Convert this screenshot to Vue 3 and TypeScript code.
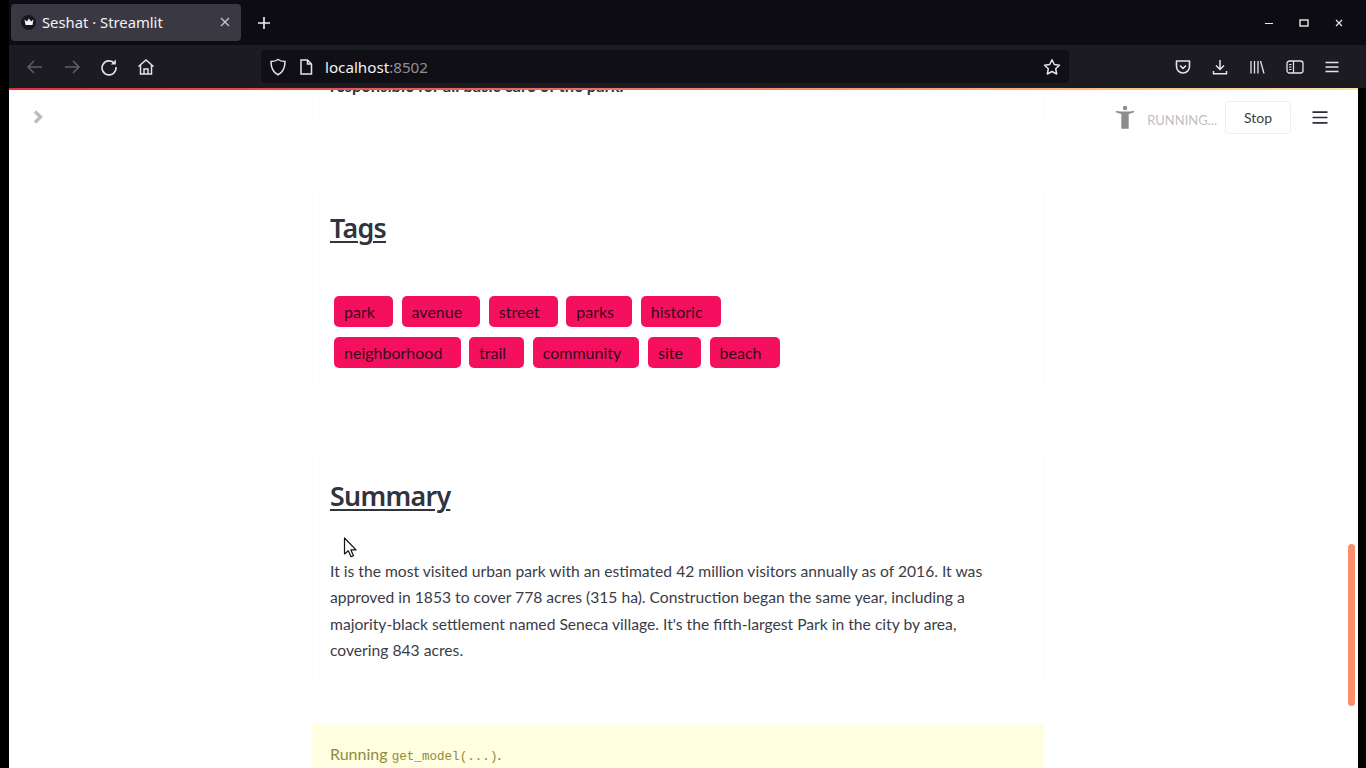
<script setup lang="ts">
const row1 = ['park', 'avenue', 'street', 'parks', 'historic']
const row2 = ['neighborhood', 'trail', 'community', 'site', 'beach']
</script>

<template>
  <div class="screen">
    <div class="tabbar">
      <div class="tab">
        <span class="favicon">
          <svg width="10" height="8" viewBox="0 0 10 8"><path d="M0.5 1.5 L3 3.5 L5 0.5 L7 3.5 L9.500 1.500 L8.500 7 H1.500 Z" fill="#f4f4f4" /></svg>
        </span>
        <span class="tab-title">Seshat · Streamlit</span>
        <svg class="tab-close" width="10" height="10" viewBox="0 0 10 10"><path d="M1 1 L9 9 M9 1 L1 9" stroke="#c8c8cc" stroke-width="1.300" /></svg>
      </div>
      <svg class="newtab" width="14" height="14" viewBox="0 0 14 14"><path d="M7 1 V13 M1 7 H13" stroke="#f0f0f2" stroke-width="1.600" /></svg>
      <div class="winctl">
        <svg width="10" height="10" viewBox="0 0 10 10"><path d="M1 5.500 H9" stroke="#e8e8e8" stroke-width="1" /></svg>
        <svg width="10" height="10" viewBox="0 0 10 10"><rect x="1" y="2" width="8" height="6" fill="none" stroke="#e8e8e8" stroke-width="1.400" /></svg>
        <svg width="10" height="10" viewBox="0 0 10 10"><path d="M2 2 L8 8 M8 2 L2 8" stroke="#e8e8e8" stroke-width="1.200" /></svg>
      </div>
    </div>

    <div class="toolbar">
      <div class="nav">
        <svg width="18" height="16" viewBox="0 0 18 16"><path d="M2 8 H16 M8 2 L2 8 L8 14" fill="none" stroke="#5f5e66" stroke-width="1.500" /></svg>
        <svg width="18" height="16" viewBox="0 0 18 16"><path d="M2 8 H16 M10 2 L16 8 L10 14" fill="none" stroke="#5f5e66" stroke-width="1.500" /></svg>
        <svg width="18" height="18" viewBox="0 0 18 18"><path d="M14.500 5.500 A7 7 0 1 0 16 9" fill="none" stroke="#e4e4e8" stroke-width="1.600" /><path d="M15.800 1.500 V6.500 H10.800 Z" fill="#e4e4e8" /></svg>
        <svg width="18" height="18" viewBox="0 0 18 18"><path d="M1.500 8.500 L9 2 L16.500 8.500 M3.500 7 V16 H14.500 V7 M7 16 V11 H11 V16" fill="none" stroke="#e4e4e8" stroke-width="1.500" /></svg>
      </div>
      <div class="urlbar">
        <svg width="16" height="18" viewBox="0 0 16 18"><path d="M8 1.500 C10 3 12.500 3.500 15 3.500 C15 10 13 14.500 8 16.800 C3 14.500 1 10 1 3.500 C3.500 3.500 6 3 8 1.500 Z" fill="none" stroke="#e4e4e8" stroke-width="1.500" /></svg>
        <svg class="page-ic" width="14" height="16" viewBox="0 0 14 16"><path d="M2 1 H8.500 L12.500 5 V15 H2 Z M8.500 1 V5 H12.500" fill="none" stroke="#e4e4e8" stroke-width="1.500" /></svg>
        <span class="url">localhost<span class="port">:8502</span></span>
        <svg class="star" width="18" height="18" viewBox="0 0 18 18"><path d="M9 1.700 L11.300 6.500 L16.500 7.200 L12.700 10.800 L13.700 16 L9 13.500 L4.300 16 L5.300 10.800 L1.500 7.200 L6.700 6.500 Z" fill="none" stroke="#e4e4e8" stroke-width="1.500" stroke-linejoin="round" /></svg>
      </div>
      <div class="tools">
        <svg width="16" height="16" viewBox="0 0 16 16"><path d="M1.500 2 H14.500 V7.500 A6.500 6.500 0 0 1 1.500 7.500 Z M5 6.500 L8 9.500 L11 6.500" fill="none" stroke="#e4e4e8" stroke-width="1.600" stroke-linejoin="round" /></svg>
        <svg width="16" height="16" viewBox="0 0 16 16"><path d="M8 1 V10 M4 6.500 L8 10.500 L12 6.500 M1.500 12 V14.800 H14.500 V12" fill="none" stroke="#e4e4e8" stroke-width="1.500" /></svg>
        <svg width="16" height="16" viewBox="0 0 16 16"><path d="M2 2 V14.500 M5.500 2 V14.500 M9 2 V14.500 M11.500 2 L15 14.500" fill="none" stroke="#e4e4e8" stroke-width="1.300" /></svg>
        <svg width="18" height="14" viewBox="0 0 18 14"><rect x="1" y="1" width="16" height="12" rx="2.500" fill="none" stroke="#e4e4e8" stroke-width="1.300" /><path d="M7.500 1 V13 M3 4.500 H5.500 M3 7 H5.500 M3 9.500 H5.500" fill="none" stroke="#e4e4e8" stroke-width="1.200" /></svg>
        <svg width="14" height="12" viewBox="0 0 14 12"><path d="M0.500 1.500 H13.500 M0.500 6 H13.500 M0.500 10.500 H13.500" stroke="#e4e4e8" stroke-width="1.500" /></svg>
      </div>
    </div>

    <div class="loadline"></div>

    <div class="page">
      <div class="col">
        <div class="card first">
          <p class="clipped">responsible for all basic care of the park.</p>
        </div>

        <section class="card tags-card">
          <h2 class="title">Tags</h2>
          <div class="tagrow"><span v-for="t in row1" :key="t" class="tag">{{ t }}</span></div>
          <div class="tagrow"><span v-for="t in row2" :key="t" class="tag">{{ t }}</span></div>
        </section>

        <section class="card summary-card">
          <h2 class="title">Summary</h2>
          <p class="body">It is the most visited urban park with an estimated 42 million visitors annually as of 2016. It was<br>approved in 1853 to cover 778 acres (315 ha). Construction began the same year, including a<br>majority-black settlement named Seneca village. It's the fifth-largest Park in the city by area,<br>covering 843 acres.</p>
        </section>

        <div class="alert">Running <code>get_model(...)</code>.</div>
      </div>

      <header class="st-header">
        <svg class="chev" width="10" height="14" viewBox="0 0 10 14"><path d="M2 1.500 L7.500 7 L2 12.500" fill="none" stroke="#bdbdbd" stroke-width="3.400" /></svg>
        <div class="st-right">
          <svg class="runner" width="20" height="24" viewBox="0 0 20 24"><circle cx="10" cy="3" r="2.200" fill="#8d8d8d" /><path d="M1 6.500 L7 8.500 H13 L19 6.500 M7 8.500 V23 H9.500 V15 H10.500 V23 H13 V8.500" fill="#8d8d8d" stroke="#8d8d8d" stroke-width="1.400" /></svg>
          <span class="running">RUNNING...</span>
          <button class="stop">Stop</button>
          <svg class="hamb" width="16" height="13" viewBox="0 0 16 13"><path d="M0.500 1.200 H15.500 M0.500 6.500 H15.500 M0.500 11.800 H15.500" stroke="#2b2d36" stroke-width="1.700" /></svg>
        </div>
      </header>

      <div class="scroll-thumb"></div>
      <svg class="cursor" width="16" height="22" viewBox="0 0 16 22"><path d="M1.500 1 V17 L5.300 13.800 L8 19.800 L10.500 18.700 L7.900 12.900 L13 12.900 Z" fill="#fff" stroke="#111" stroke-width="1.200" stroke-linejoin="round" /></svg>
    </div>
  </div>
</template>

<style scoped>
.screen {
  width: 1366px;
  height: 768px;
  box-sizing: border-box;
  padding: 0 8px 0 9px;
  background: #000;
  display: flex;
  flex-direction: column;
  overflow: hidden;
  font-family: "Lato", "Noto Sans", sans-serif;
}
.tabbar {
  height: 45px;
  flex: none;
  background: #0c0c12;
  display: flex;
  align-items: center;
  padding-left: 2px;
  margin-right: -8px;
}
.tab {
  width: 230px;
  height: 37px;
  margin-top: -1px;
  background: #3a3943;
  border-radius: 4px;
  box-sizing: border-box;
  padding: 0 11px 0 10px;
  display: flex;
  align-items: center;
}
.favicon {
  width: 15px;
  height: 15px;
  border-radius: 50%;
  background: #17171f;
  display: flex;
  align-items: center;
  justify-content: center;
  margin-right: 6px;
}
.tab-title {
  flex: 1;
  color: #f2f2f4;
  font-size: 14.800px;
  font-family: "Noto Sans", sans-serif;
}
.newtab { margin-left: 16px; }
.winctl {
  margin-left: auto;
  display: flex;
  gap: 25px;
  padding-right: 22px;
}
.toolbar {
  height: 43px;
  flex: none;
  background: #1c1b22;
  display: flex;
  align-items: center;
  margin-right: -8px;
  padding-right: 27px;
}
.nav {
  display: flex;
  align-items: center;
  gap: 19px;
  padding-left: 17px;
  width: 252px;
  box-sizing: border-box;
  flex: none;
}
.urlbar {
  width: 808px;
  height: 33px;
  background: #0f0f15;
  border-radius: 4px;
  display: flex;
  align-items: center;
  padding: 0 8px 0 9px;
  box-sizing: border-box;
  flex: none;
}
.page-ic { margin-left: 13px; }
.url {
  margin-left: 12px;
  color: #f2f2f4;
  font-size: 15.200px;
  font-family: "Noto Sans", sans-serif;
}
.port { color: #8f8f98; }
.star { margin-left: auto; }
.tools {
  margin-left: auto;
  display: flex;
  align-items: center;
  gap: 21px;
}
.loadline {
  height: 2px;
  flex: none;
  background: linear-gradient(90deg, #e0303f 0%, #ef6a5e 40%, #f8b07a 75%, #fde3a0 100%);
}
.page {
  flex: 1;
  position: relative;
  background: #fff;
  overflow: hidden;
  min-height: 0;
}
.st-header {
  position: absolute;
  top: 3px;
  left: 0;
  right: 0;
  height: 48px;
  display: flex;
  align-items: center;
  padding: 0 30px 0 24px;
}
.st-right {
  margin-left: auto;
  display: flex;
  align-items: center;
}
.runner { margin-right: 12px; }
.running {
  color: #c0c0c2;
  font-size: 13px;
  margin-top: 5px;
  margin-right: 8px;
}
.stop {
  width: 66px;
  height: 33px;
  background: #fff;
  border: 1px solid #eeeef0;
  border-radius: 4px;
  color: #3a3c45;
  font: 14px "Lato", sans-serif;
  padding: 0;
}
.hamb { margin-left: 21px; }
.col {
  width: 732px;
  margin-left: 303px;
}
.card {
  border: 1px solid #fcfcfc;
  box-sizing: border-box;
  padding-left: 17px;
}
.first {
  height: 54px;
  margin-top: -21px;
  margin-bottom: 62px;
}
.clipped {
  margin: 0;
  padding-top: 3px;
  font-weight: 700;
  font-size: 16.500px;
  line-height: 26px;
  color: #31333f;
}
.tags-card {
  height: 206px;
  margin-bottom: 59px;
  padding-top: 22px;
}
.title {
  margin: 0;
  font-size: 26.800px;
  font-weight: 600;
  line-height: 40px;
  color: #31333f;
  text-decoration: underline;
  text-decoration-thickness: 2px;
  text-underline-offset: 3px;
  font-family: "Noto Sans", sans-serif;
  letter-spacing: -0.700px;
}
.tagrow {
  display: flex;
  gap: 8.500px;
  margin: 0 0 10px 4px;
}
.title + .tagrow { margin-top: 48px; }
.tag {
  height: 31px;
  line-height: 31px;
  padding: 0 18.200px 0 10px;
  background: #f5105f;
  border-radius: 5px;
  font-size: 16px;
  color: #350a1c;
  white-space: nowrap;
}
.summary-card {
  height: 232px;
  margin-bottom: 41px;
  padding-top: 25px;
}
.body {
  margin: 42px 0 0;
  font-size: 15.670px;
  line-height: 26.300px;
  color: #3a3c47;
  white-space: nowrap;
}
.alert {
  height: 80px;
  background: #fffee0;
  border-radius: 4px;
  box-sizing: border-box;
  padding: 20px 18px;
  color: #8f8a3e;
  font-size: 16px;
  line-height: 22px;
}
.alert code {
  font-family: "Liberation Mono", "DejaVu Sans Mono", monospace;
  font-size: 12.600px;
}
.scroll-thumb {
  position: absolute;
  left: 1339px;
  top: 454px;
  width: 7px;
  height: 162px;
  border-radius: 4px;
  background: #fb8f6c;
}
.cursor {
  position: absolute;
  left: 334px;
  top: 447px;
}
</style>
